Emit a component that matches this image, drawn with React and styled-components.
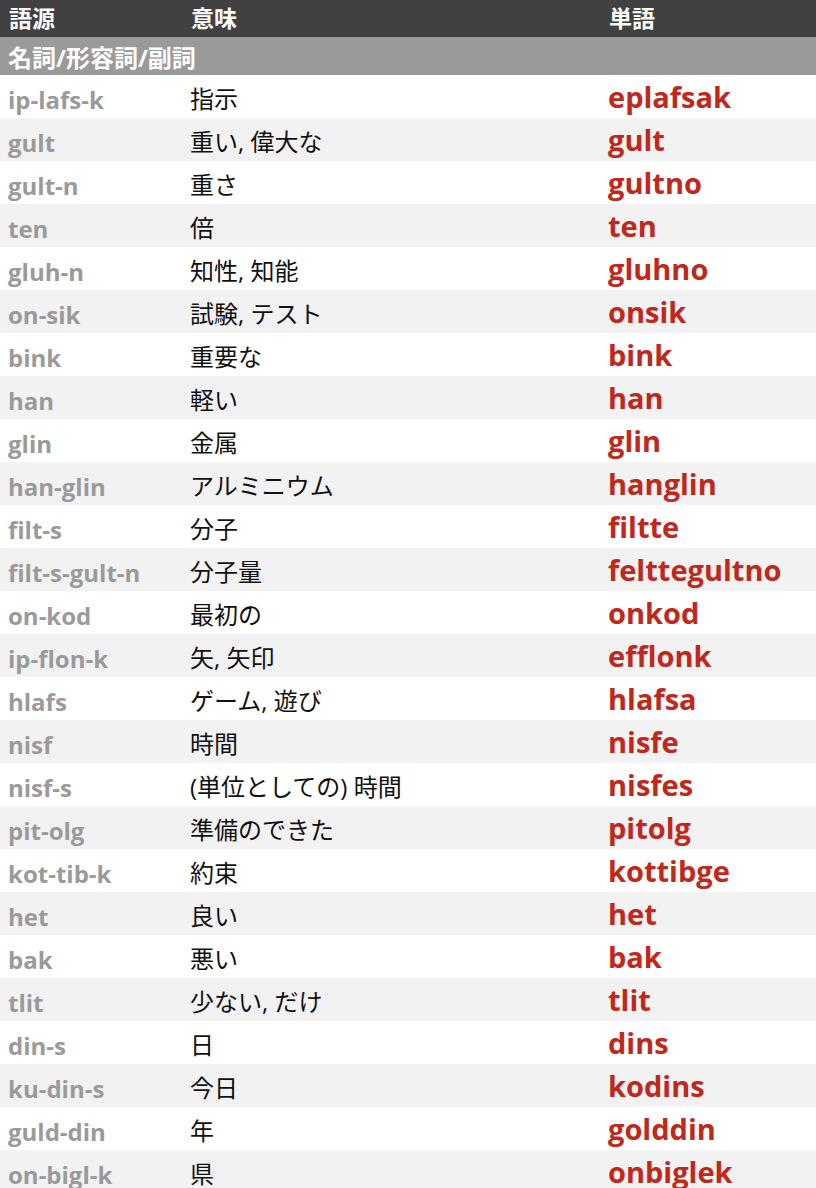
import styled, { createGlobalStyle } from 'styled-components';

const GlobalStyle = createGlobalStyle`
  body {
    margin: 0;
    background: #ffffff;
    font-family: "Open Sans", "Noto Sans CJK JP", sans-serif;
  }
`;

const rows = [
  ['ip-lafs-k', '指示', 'eplafsak'],
  ['gult', '重い, 偉大な', 'gult'],
  ['gult-n', '重さ', 'gultno'],
  ['ten', '倍', 'ten'],
  ['gluh-n', '知性, 知能', 'gluhno'],
  ['on-sik', '試験, テスト', 'onsik'],
  ['bink', '重要な', 'bink'],
  ['han', '軽い', 'han'],
  ['glin', '金属', 'glin'],
  ['han-glin', 'アルミニウム', 'hanglin'],
  ['filt-s', '分子', 'filtte'],
  ['filt-s-gult-n', '分子量', 'felttegultno'],
  ['on-kod', '最初の', 'onkod'],
  ['ip-flon-k', '矢, 矢印', 'efflonk'],
  ['hlafs', 'ゲーム, 遊び', 'hlafsa'],
  ['nisf', '時間', 'nisfe'],
  ['nisf-s', '(単位としての) 時間', 'nisfes'],
  ['pit-olg', '準備のできた', 'pitolg'],
  ['kot-tib-k', '約束', 'kottibge'],
  ['het', '良い', 'het'],
  ['bak', '悪い', 'bak'],
  ['tlit', '少ない, だけ', 'tlit'],
  ['din-s', '日', 'dins'],
  ['ku-din-s', '今日', 'kodins'],
  ['guld-din', '年', 'golddin'],
  ['on-bigl-k', '県', 'onbiglek'],
];

const App = () => {
  return (
    <>
      <GlobalStyle />
      <Table>
        <colgroup>
          <col style={{ width: 182 }} />
          <col style={{ width: 418 }} />
          <col />
        </colgroup>
        <thead>
          <HeadRow>
            <HeadCell>語源</HeadCell>
            <HeadCell>意味</HeadCell>
            <HeadCell>単語</HeadCell>
          </HeadRow>
        </thead>
        <tbody>
          <SectionRow>
            <SectionCell colSpan={3}>名詞/形容詞/副詞</SectionCell>
          </SectionRow>
          {rows.map(([origin, meaning, word], i) => (
            <Row key={origin} $striped={i % 2 === 1}>
              <Origin>{origin}</Origin>
              <Meaning>{meaning}</Meaning>
              <Word>{word}</Word>
            </Row>
          ))}
        </tbody>
      </Table>
    </>
  );
};

export default App;

const Table = styled.table`
  width: 816px;
  border-collapse: collapse;
  table-layout: fixed;
`;

const HeadRow = styled.tr`
  height: 37px;
  background-color: #414141;
`;

const HeadCell = styled.th`
  padding: 0 9px;
  text-align: left;
  color: #ffffff;
  font-size: 23px;
  font-weight: 700;
  line-height: 1;
  vertical-align: middle;
`;

const SectionRow = styled.tr`
  height: 38px;
  background-color: #9a9a9a;
`;

const SectionCell = styled.td`
  padding: 3px 8px 0;
  color: #ffffff;
  font-size: 24px;
  font-weight: 700;
  line-height: 1;
`;

const Row = styled.tr`
  height: 43px;
  background-color: ${({ $striped }) => ($striped ? '#f2f2f2' : '#ffffff')};
`;

const Origin = styled.td`
  padding: 6px 8px 0;
  color: #9a9a9a;
  font-size: 24px;
  font-weight: 700;
  line-height: 1;
  white-space: nowrap;
`;

const Meaning = styled.td`
  padding: 4px 8px 0;
  color: #111111;
  font-size: 24px;
  line-height: 1;
  white-space: nowrap;
`;

const Word = styled.td`
  padding: 0 8px;
  color: #c0281c;
  font-size: 29px;
  font-weight: 700;
  line-height: 1;
  white-space: nowrap;
`;
